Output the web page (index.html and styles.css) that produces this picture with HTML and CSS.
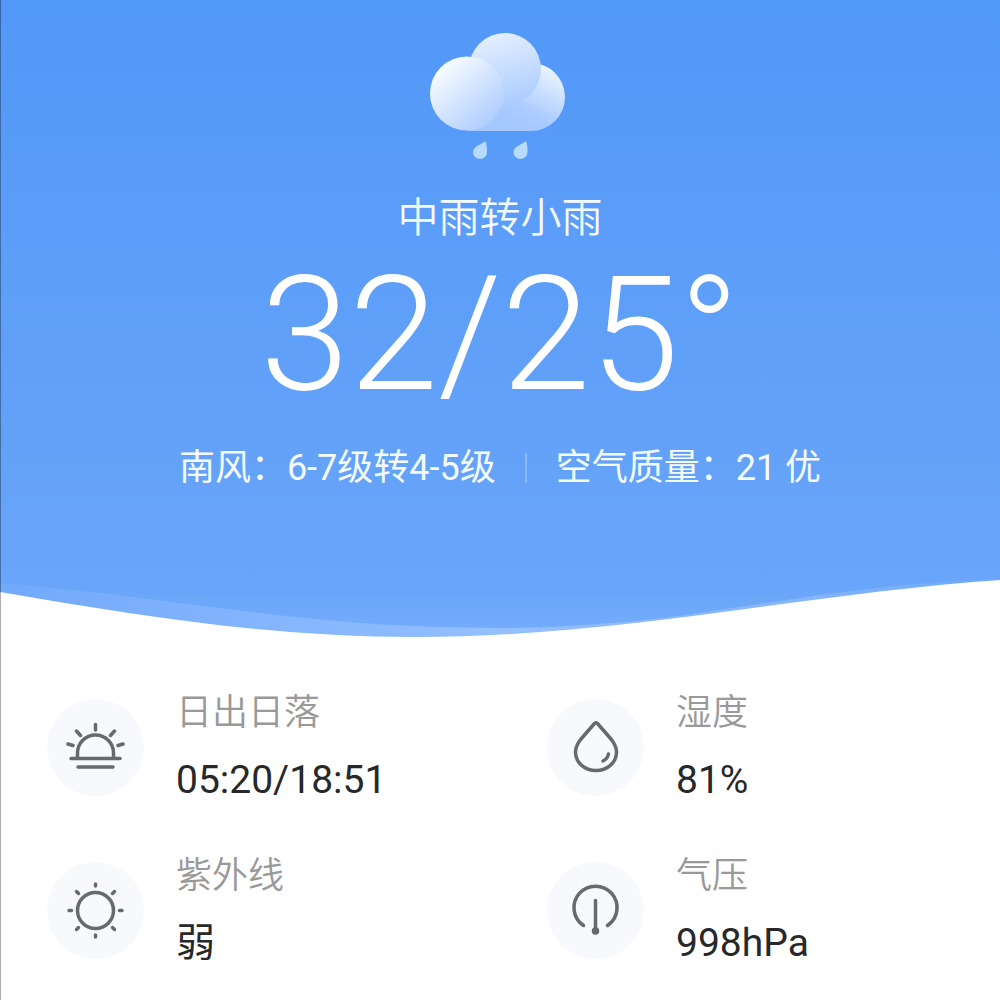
FILE: index.html
```html
<!DOCTYPE html>
<html lang="zh-CN">
<head>
<meta charset="utf-8">
<meta name="viewport" content="width=device-width, initial-scale=1">
<title>天气</title>
<link rel="stylesheet" href="styles.css">
</head>
<body>
<main class="weather">
  <section class="hero">
    <svg class="cloud" viewBox="0 0 136 128" aria-hidden="true">
      <defs>
        <linearGradient id="left" x1="0.15" y1="0.1" x2="0.85" y2="0.9">
          <stop offset="0" stop-color="#fafdff"/>
          <stop offset="1" stop-color="#adccff"/>
        </linearGradient>
        <linearGradient id="top" x1="0.3" y1="0" x2="0.6" y2="1">
          <stop offset="0" stop-color="#e6f0ff"/>
          <stop offset="1" stop-color="#abccff"/>
        </linearGradient>
        <linearGradient id="right" x1="0.8" y1="0.1" x2="0.4" y2="0.9">
          <stop offset="0" stop-color="#eaf3ff"/>
          <stop offset="0.75" stop-color="#adcdff"/>
          <stop offset="1" stop-color="#a5c8ff"/>
        </linearGradient>
      </defs>
      <path d="M37 62H101V99H37Z" fill="#a5c8ff"/>
      <circle cx="101" cy="65" r="34" fill="url(#right)"/>
      <circle cx="75" cy="37" r="36" fill="url(#top)"/>
      <circle cx="37" cy="61.500" r="37" fill="url(#left)"/>
      <path d="M56 110C57 115 57 118 57 120A7 7 0 1 1 43 120C43.500 115 49 113 54.500 110Q55.500 109 56 110Z" fill="#b7dbff"/>
      <path d="M96.500 110C97.500 115 97.500 118 97.500 120A7 7 0 1 1 83.500 120C84 115 89.500 113 95 110Q96 109 96.500 110Z" fill="#b7dbff"/>
    </svg>
    <h1 class="condition">中雨转小雨</h1>
    <p class="temperature">32/25°</p>
    <div class="meta">
      <span>南风：6-7级转4-5级</span>
      <span class="divider"></span>
      <span>空气质量：21 优</span>
    </div>
    <svg class="wave" viewBox="0 0 1000 70" preserveAspectRatio="none" aria-hidden="true">
      <defs>
        <linearGradient id="band" x1="0" y1="0" x2="1" y2="0">
          <stop offset="0" stop-color="#72a9fb"/>
          <stop offset="0.5" stop-color="#94bfff"/>
          <stop offset="0.8" stop-color="#86b5fa"/>
          <stop offset="1" stop-color="#6ea8fa"/>
        </linearGradient>
      </defs>
      <path d="M0 13C200 30 300 58 500 58C560 58 640 52 700 43C780 31 900 11 1000 9V70H0Z" fill="url(#band)"/>
      <path d="M0 22C140 46 270 67 415 67C620 67 800 24 1000 10V71H0Z" fill="#fff"/>
    </svg>
  </section>
  <dl class="details">
    <div class="item">
      <svg class="icon" viewBox="0 0 97 97" aria-hidden="true">
        <path d="M30.500 58V54A18 18 0 0 1 66.500 54V58M24 59.500H73"/>
        <path d="M31 68H66M48.500 25.500V31M29.500 32L33.500 36.500M67.500 32L63.500 36.500M21 45L26 46.500M76 45L71 46.500"/>
      </svg>
      <div class="text">
        <dt>日出日落</dt>
        <dd>05:20/18:51</dd>
      </div>
    </div>
    <div class="item">
      <svg class="icon" viewBox="0 0 97 97" aria-hidden="true">
        <path d="M47.500 24.500Q49 23 50.500 24.500L64 40C67.500 44.500 69.500 48 69.500 53C69.500 64 60 71.500 49 71.500S28.500 64 28.500 53C28.500 48 30.500 44.500 34 40Z"/>
        <path d="M61.500 55Q60.500 60 56 62"/>
      </svg>
      <div class="text">
        <dt>湿度</dt>
        <dd>81%</dd>
      </div>
    </div>
    <div class="item">
      <svg class="icon" viewBox="0 0 97 97" aria-hidden="true">
        <circle cx="48.500" cy="48.500" r="18"/>
        <path d="M48.500 22V24M48.500 73V75M22 48.500H24.500M72.500 48.500H75M29.500 29.500L31.500 31.500M67.500 29.500L65.500 31.500M29.500 67.500L31.500 65.500M67.500 67.500L65.500 65.500"/>
      </svg>
      <div class="text">
        <dt>紫外线</dt>
        <dd>弱</dd>
      </div>
    </div>
    <div class="item">
      <svg class="icon" viewBox="0 0 97 97" aria-hidden="true">
        <path d="M36.500 63.500A21.500 21.500 0 1 1 60.500 63.500M48.500 38.500V68"/>
        <circle cx="48.500" cy="69" r="2" fill="#666a6d"/>
      </svg>
      <div class="text">
        <dt>气压</dt>
        <dd>998hPa</dd>
      </div>
    </div>
  </dl>
</main>
</body>
</html>
```
FILE: styles.css
```css
* {
  box-sizing: border-box;
}

body {
  margin: 0;
  background: #fff;
  font-family: Roboto, "Noto Sans CJK SC", sans-serif;
}

.weather {
  position: relative;
  min-height: 100vh;
}

/* Thin shade along the left edge of the screen */
.weather::before {
  content: "";
  position: absolute;
  inset: 0 auto 0 0;
  width: 1px;
  background: rgba(0, 0, 0, 0.32);
}

.hero {
  display: flex;
  flex-direction: column;
  align-items: center;
  padding-top: 32px;
  background: linear-gradient(#5298f8, #69a5f9 92%, #77adfd);
  color: #f4fbff;
}

.cloud {
  width: 136px;
  height: 128px;
  margin-right: 4px;
}

.condition {
  margin: 28px 0 0;
  font-size: 41px;
  font-weight: 350;
  line-height: 60px;
}

.temperature {
  margin: 0;
  color: #fff;
  font-size: 160px;
  font-weight: 300;
  line-height: 174px;
}

.meta {
  display: flex;
  align-items: center;
  gap: 29px;
  margin-top: 22px;
  font-size: 36px;
  line-height: 48px;
}

.divider {
  width: 2px;
  height: 30px;
  background: rgba(255, 255, 255, 0.25);
}

.wave {
  display: block;
  width: 100%;
  height: 70px;
  margin-top: 78px;
}

.details {
  display: grid;
  grid-template-columns: 1fr 1fr;
  row-gap: 50px;
  margin: 0;
  padding: 51px 0 36px;
}

.item {
  display: flex;
  align-items: center;
  gap: 32px;
  padding-left: 47px;
}

.icon {
  width: 97px;
  height: 97px;
  border-radius: 50%;
  background: #f7f9fc;
  fill: none;
  stroke: #666a6d;
  stroke-width: 3.5;
  stroke-linecap: round;
  stroke-linejoin: round;
}

.text {
  display: grid;
  gap: 21px;
}

dt {
  color: #999;
  font-size: 36px;
  font-weight: 350;
  line-height: 44px;
}

dd {
  margin: 0;
  color: #26282a;
  font-size: 39px;
  line-height: 48px;
}
```
